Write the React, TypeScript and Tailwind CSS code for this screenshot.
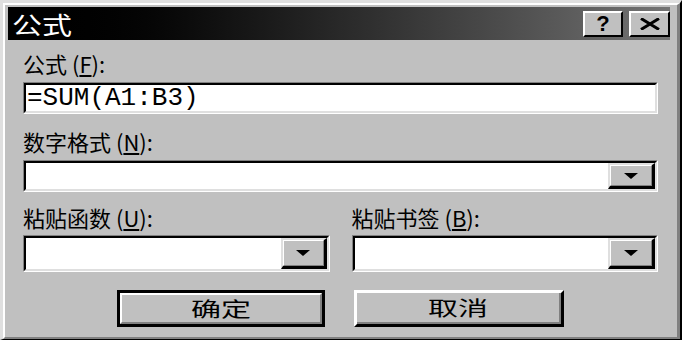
import React from 'react';

const cjk = { fontFamily: '"Noto Sans CJK SC", "Noto Sans", sans-serif' };

// Sunken white field, 3px bevel each side
const Field: React.FC<{ className?: string; children?: React.ReactNode }> = ({ className = '', children }) => (
  <div className={`border border-t-[#808080] border-l-[#808080] border-b-white border-r-white ${className}`}>
    <div className="h-full border-2 border-t-black border-l-black border-b-[#dfdfdf] border-r-[#dfdfdf] bg-white flex items-stretch">
      {children}
    </div>
  </div>
);

const DropButton: React.FC<{ className?: string }> = ({ className = '' }) => (
  <div className={`ml-auto bg-[#c0c0c0] border-t-2 border-l-2 border-t-[#dfdfdf] border-l-[#dfdfdf] border-b-[3px] border-r-[3px] border-b-black border-r-black ${className}`}>
    <div className="h-full border-t border-l border-t-white border-l-white border-b border-r border-b-[#808080] border-r-[#808080] flex items-center justify-center">
      <svg width="14" height="6" viewBox="0 0 14 6">
        <polygon points="0,0 14,0 7,6" fill="#000" />
      </svg>
    </div>
  </div>
);

const Label: React.FC<{ text: string; hot: string }> = ({ text, hot }) => (
  <div className="h-[24px] leading-[24px] text-[22px] text-black whitespace-nowrap" style={cjk}>
    {text} (<span className="underline underline-offset-2">{hot}</span>):
  </div>
);

export default function App() {
  return (
    <div className="w-[682px] h-[340px] box-border bg-[#c0c0c0] border-t-[3px] border-l-[3px] border-r-[2px] border-b-[1px] border-t-[#dfdfdf] border-l-[#dfdfdf] border-r-black border-b-black">
      <div className="h-full box-border border-t-2 border-l-2 border-t-white border-l-white border-r-[3px] border-b-2 border-r-[#808080] border-b-[#808080] flex flex-col">
        {/* Title bar */}
        <div className="mt-[2px] ml-[3px] mr-[7px] h-[33px] bg-gradient-to-r from-[#000000] to-[#747474] flex items-center">
          <span
            className="inline-block ml-[4px] text-[24px] leading-[24px] text-white origin-left scale-x-125"
            style={cjk}
          >
            公式
          </span>
          <div className="ml-auto flex gap-[6px] mr-0">
            <div className="w-[40px] h-[26px] bg-[#c0c0c0] border-t-2 border-l-2 border-t-white border-l-white border-b-2 border-r-2 border-b-black border-r-black flex items-center justify-center">
              <span className="text-[22px] leading-none font-bold text-black" style={{ fontFamily: '"Liberation Sans", sans-serif' }}>
                ?
              </span>
            </div>
            <div className="w-[41px] h-[26px] bg-[#c0c0c0] border-t-2 border-l-2 border-t-white border-l-white border-b-2 border-r-2 border-b-black border-r-black flex items-center justify-center">
              <svg width="20" height="12" viewBox="0 0 20 12">
                <path d="M1 0.5 L19 11.5 M19 0.5 L1 11.5" stroke="#000" strokeWidth="3" />
              </svg>
            </div>
          </div>
        </div>

        {/* Form */}
        <div className="pl-[18px] pr-[19px] flex flex-col">
          <div className="mt-[11px]">
            <Label text="公式" hot="F" />
          </div>
          <Field className="mt-[7px] h-[32px]">
            <span
              className="pl-[1px] text-[26px] leading-[26px] self-center text-black"
              style={{ fontFamily: '"Liberation Mono", monospace' }}
            >
              =SUM(A1:B3)
            </span>
          </Field>

          <div className="mt-[15px]">
            <Label text="数字格式" hot="N" />
          </div>
          <Field className="mt-[7px] h-[32px]">
            <DropButton className="w-[47px]" />
          </Field>

          <div className="mt-[13px] grid grid-cols-2 gap-x-[22px]">
            <Label text="粘贴函数" hot="U" />
            <Label text="粘贴书签" hot="B" />
            <Field className="mt-[6px] h-[37px]">
              <DropButton className="w-[46px]" />
            </Field>
            <Field className="mt-[6px] h-[37px]">
              <DropButton className="w-[47px]" />
            </Field>
          </div>

          {/* Buttons */}
          <div className="mt-[18px] flex justify-center gap-[29px]">
            <div className="w-[208px] h-[37px] border-[3px] border-black">
              <div className="h-full bg-[#c0c0c0] border-t-2 border-l-2 border-t-white border-l-white border-b-2 border-r-2 border-b-[#808080] border-r-[#808080] flex items-center justify-center">
                <span className="inline-block text-[20px] leading-[20px] text-black scale-x-150" style={cjk}>
                  确定
                </span>
              </div>
            </div>
            <div className="w-[210px] h-[37px] bg-[#c0c0c0] border-t-[3px] border-l-[3px] border-t-white border-l-white border-b-[3px] border-r-[3px] border-b-black border-r-black">
              <div className="h-full border-b-2 border-r-2 border-b-[#808080] border-r-[#808080] flex items-center justify-center">
                <span className="inline-block text-[20px] leading-[20px] text-black scale-x-150" style={cjk}>
                  取消
                </span>
              </div>
            </div>
          </div>
        </div>
      </div>
    </div>
  );
}
